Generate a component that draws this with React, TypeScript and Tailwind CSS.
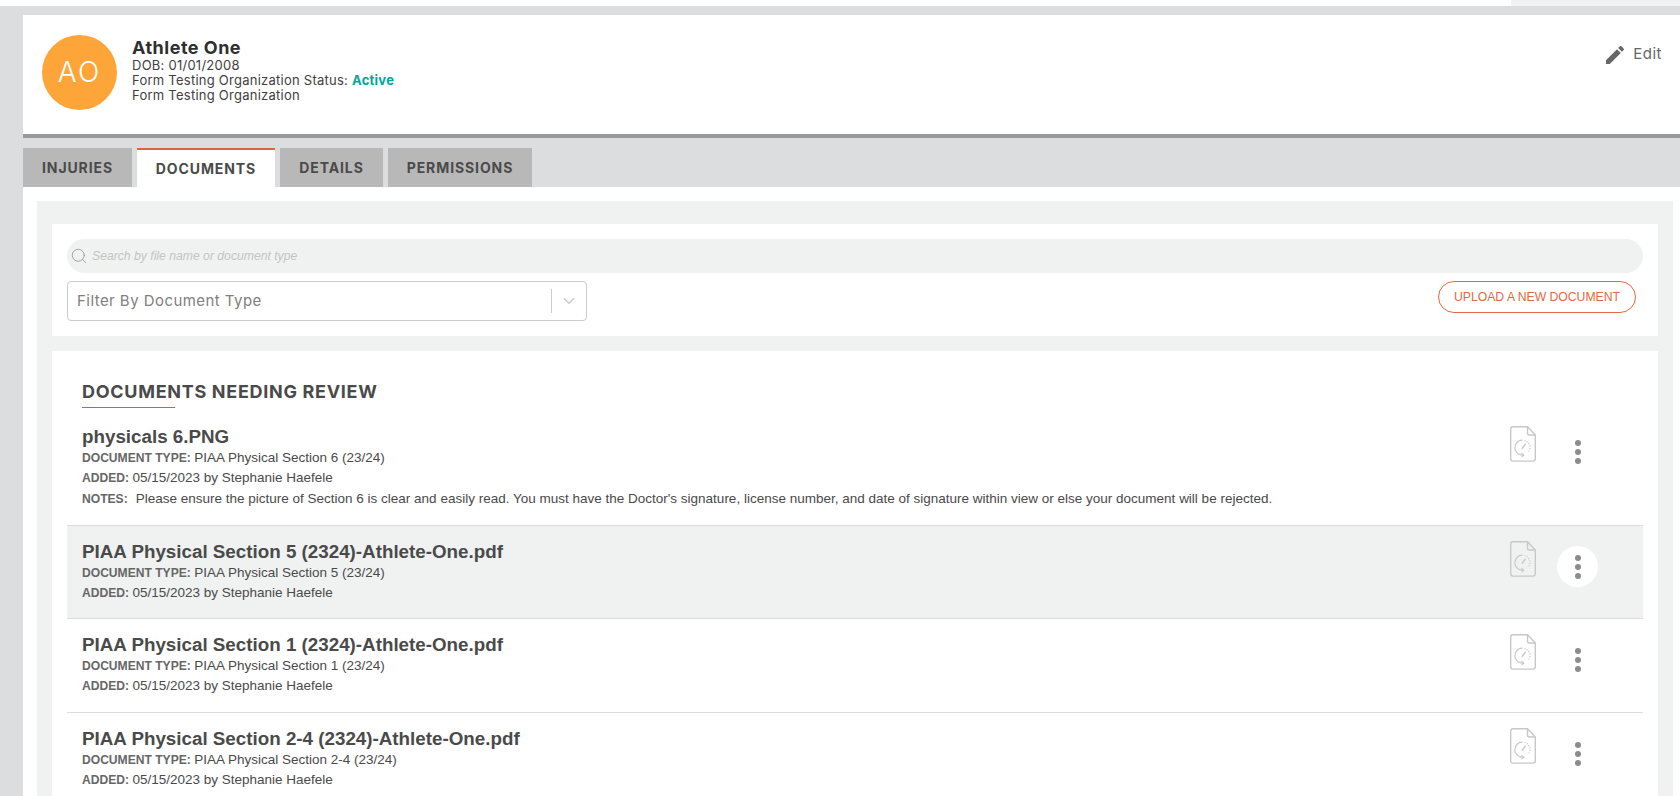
import { ChevronDown, Search } from 'lucide-react'
import React from 'react'

const gotham = "font-['Inter',sans-serif]"

const docs = [
  {
    title: 'physicals 6.PNG',
    type: 'PIAA Physical Section 6 (23/24)',
    notes:
      "Please ensure the picture of Section 6 is clear and easily read. You must have the Doctor's signature, license number, and date of signature within view or else your document will be rejected.",
    height: 'h-[115px]',
  },
  { title: 'PIAA Physical Section 5 (2324)-Athlete-One.pdf', type: 'PIAA Physical Section 5 (23/24)', hover: true, height: 'h-[93px]' },
  { title: 'PIAA Physical Section 1 (2324)-Athlete-One.pdf', type: 'PIAA Physical Section 1 (23/24)', height: 'h-[94px]' },
  { title: 'PIAA Physical Section 2-4 (2324)-Athlete-One.pdf', type: 'PIAA Physical Section 2-4 (23/24)', height: 'h-[94px]' },
]

const tabs = [
  { label: 'INJURIES', width: 'w-[109px]' },
  { label: 'DOCUMENTS', width: 'w-[138px]', active: true },
  { label: 'DETAILS', width: 'w-[103px]' },
  { label: 'PERMISSIONS', width: 'w-[144px]' },
]

function DocIcon() {
  return (
    <svg width="26" height="36" viewBox="0 0 26 36" fill="none" stroke="#c8c8c8" strokeWidth="1.4">
      <path d="M3 .7h14.500L25.300 9v23.500a2.600 2.600 0 0 1-2.600 2.600H3A2.400 2.400 0 0 1 .7 32.700V3A2.400 2.400 0 0 1 3 .7Z" />
      <path d="M17.500.7V7a2 2 0 0 0 2 2h5.800" />
      <path d="M12.500 14.200A7.500 7.500 0 0 0 8 27.700c1.600 1.100 3.400 1.500 5.500 1.500" strokeWidth="1.200" />
      <path d="M11.500 27.300l2.200 1.900-2.200 1.900" strokeWidth="1.200" />
      <path d="M14.500 14.400A7.500 7.500 0 0 1 18.500 26" strokeWidth="1.300" strokeDasharray="1 1.500" />
      <path d="M11.800 22.800L15.500 18" strokeWidth="1.400" />
    </svg>
  )
}

function DocRow({ doc }: { doc: (typeof docs)[number] }) {
  return (
    <div className={`flex justify-between border-b border-[#dcdedd] pl-[15px] ${doc.height} ${doc.hover ? 'bg-[#f0f2f1]' : ''}`}>
      <div className="pt-[16px] font-['Liberation_Sans',sans-serif] text-[#4a4a4a]">
        <div className="text-[18.8px] leading-[20px] font-bold">{doc.title}</div>
        <div className="mt-[1px] text-[13.5px] leading-[20px]">
          <span className="text-[12.1px] font-bold text-[#666]">DOCUMENT TYPE: </span>
          {doc.type}
        </div>
        <div className="text-[13.5px] leading-[20px]">
          <span className="text-[12.1px] font-bold text-[#666]">ADDED: </span>
          05/15/2023 by Stephanie Haefele
        </div>
        {doc.notes && (
          <div className="mt-[1px] text-[13.5px] leading-[20px]">
            <span className="mr-[8px] text-[12.1px] font-bold text-[#666]">NOTES:</span>
            {doc.notes}
          </div>
        )}
      </div>
      <div className="flex items-start pt-[15px] pr-[45px]">
        <DocIcon />
        <div
          className={`mt-[5px] ml-[21px] flex h-[41px] w-[41px] flex-col items-center justify-center gap-[3px] rounded-full ${doc.hover ? 'bg-white' : ''}`}
        >
          <span className="h-[6px] w-[6px] rounded-full bg-[#8c8c8c]" />
          <span className="h-[6px] w-[6px] rounded-full bg-[#8c8c8c]" />
          <span className="h-[6px] w-[6px] rounded-full bg-[#8c8c8c]" />
        </div>
      </div>
    </div>
  )
}

export default function App() {
  return (
    <div className={`flex h-[796px] flex-col overflow-hidden bg-[#dcddde] ${gotham}`}>
      <div className="flex h-[6px] justify-end bg-white">
        <div className="w-[169px] bg-[#f2f2f2]" />
      </div>

      <div className="ml-[23px] flex min-h-0 flex-1 flex-col pt-[9px]">
        <div className="flex h-[123px] justify-between border-b-4 border-[#999] bg-white pt-[20px] pl-[19px]">
          <div className="flex">
            <div className="flex h-[75px] w-[75px] items-center justify-center rounded-full bg-[#fda538] pb-[2px] text-[28px] font-light tracking-[2px] text-white">
              AO
            </div>
            <div className="ml-[15px] text-[13px] leading-[15px] tracking-[0.25px] text-[#414042]">
              <div className="mt-[3px] text-[18px] leading-[20px] font-bold tracking-[0.5px] text-[#2f2f2f]">Athlete One</div>
              <div>DOB: 01/01/2008</div>
              <div>
                Form Testing Organization Status: <span className="font-bold text-[#00a99d]">Active</span>
              </div>
              <div>Form Testing Organization</div>
            </div>
          </div>
          <div className="flex h-[38px] items-center gap-[9px] pr-[18px] text-[#666]">
            <svg width="18" height="18" viewBox="3 3 18 18" fill="#666" className="mt-[2px]">
              <path d="M3 17.250V21h3.750L17.810 9.940l-3.750-3.750L3 17.250zM20.710 7.040a1 1 0 0 0 0-1.410l-2.340-2.340a1 1 0 0 0-1.410 0l-1.830 1.830 3.750 3.750 1.830-1.830z" />
            </svg>
            <span className="text-[15px] tracking-[0.5px]">Edit</span>
          </div>
        </div>

        <div className="flex h-[49px] items-end gap-[5px]">
          {tabs.map((tab) => (
            <div
              key={tab.label}
              className={`flex h-[39px] items-center justify-center text-[14px] font-bold tracking-[0.9px] text-[#4a4a4a] ${tab.width} ${
                tab.active ? 'border-t-2 border-[#e0623a] bg-white' : 'bg-[#b8b8b8]'
              }`}
            >
              {tab.label}
            </div>
          ))}
        </div>

        <div className="min-h-0 flex-1 bg-white pt-[14px] pr-[7px] pl-[14px]">
          <div className="h-full bg-[#f0f2f1] px-[15px] pt-[23px]">
            <div className="flex h-[112px] flex-col bg-white pt-[15px] pr-[15px] pl-[15px]">
              <div className="flex h-[34px] items-center rounded-full bg-[#f0f2f1] pl-[3px]">
                <Search size={18} strokeWidth={1} className="text-[#8a8a8a]" />
                <span className="ml-[4px] font-['Liberation_Sans',sans-serif] text-[12.2px] text-[#c4c4c4] italic">
                  Search by file name or document type
                </span>
              </div>
              <div className="mt-[8px] flex items-start justify-between">
                <div className="flex h-[40px] w-[520px] items-center justify-between rounded-[4px] border border-[#cccccc] pr-[8px] pl-[9px]">
                  <span className="pt-[1px] text-[15px] tracking-[0.45px] text-[#808080]">Filter By Document Type</span>
                  <div className="flex items-center">
                    <span className="h-[24px] w-px bg-[#cccccc]" />
                    <ChevronDown size={18} className="ml-[8px] text-[#cccccc]" />
                  </div>
                </div>
                <button className="mr-[7px] h-[32px] w-[198px] rounded-full border border-[#e2693f] font-['Liberation_Sans',sans-serif] text-[12.2px] text-[#e2693f]">
                  UPLOAD A NEW DOCUMENT
                </button>
              </div>
            </div>

            <div className="mt-[15px] bg-white px-[15px] pt-[29px]">
              <h2 className="ml-[15px] w-fit text-[18px] leading-[24px] font-bold tracking-[0.7px] text-[#4a4a4a]">DOCUMENTS NEEDING REVIEW</h2>
              <div className="mt-[3px] mb-[3px] ml-[15px] h-px w-[93px] bg-[#c8643f]" />
              {docs.map((doc) => (
                <DocRow key={doc.title} doc={doc} />
              ))}
            </div>
          </div>
        </div>
      </div>
    </div>
  )
}
